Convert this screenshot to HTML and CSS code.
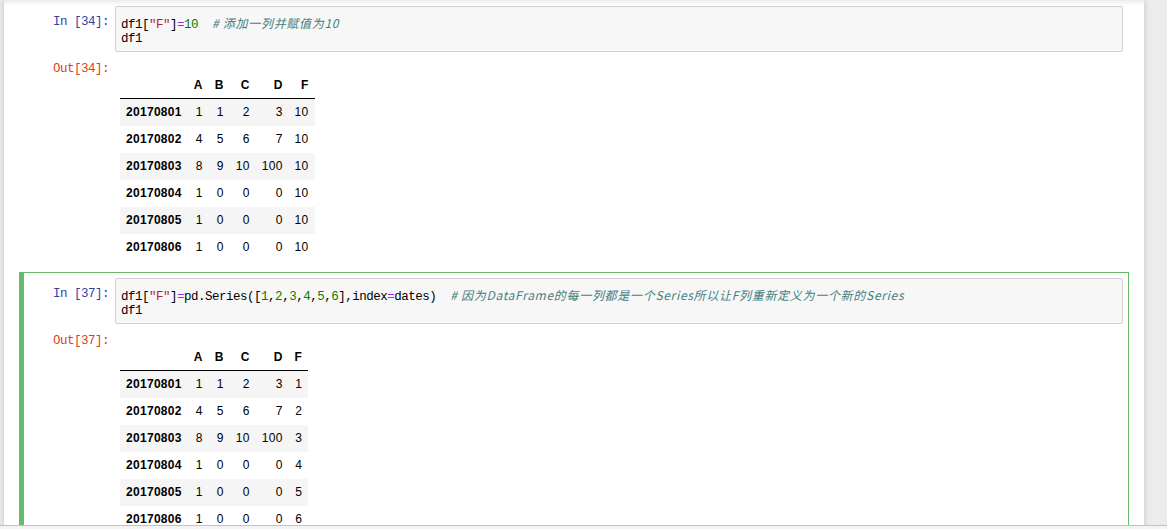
FILE: index.html
```html
<!DOCTYPE html>
<html lang="zh">
<head>
<meta charset="utf-8">
<title>Notebook</title>
<link rel="stylesheet" href="styles.css">
</head>
<body>
<div class="notebook">
  <div class="cell">
    <div class="row">
      <div class="prompt in">In&nbsp;[34]:</div>
      <div class="code">
        <div class="line">df1[<span class="s">"F"</span>]<span class="o">=</span><span class="n">10</span>  <span class="c"># 添加一列并赋值为10</span></div>
        <div class="line">df1</div>
      </div>
    </div>
    <div class="row">
      <div class="prompt out">Out[34]:</div>
      <div class="result">
        <table class="df">
          <thead>
            <tr><th></th><th>A</th><th>B</th><th>C</th><th>D</th><th>F</th></tr>
          </thead>
          <tbody>
            <tr><th>20170801</th><td>1</td><td>1</td><td>2</td><td>3</td><td>10</td></tr>
            <tr><th>20170802</th><td>4</td><td>5</td><td>6</td><td>7</td><td>10</td></tr>
            <tr><th>20170803</th><td>8</td><td>9</td><td>10</td><td>100</td><td>10</td></tr>
            <tr><th>20170804</th><td>1</td><td>0</td><td>0</td><td>0</td><td>10</td></tr>
            <tr><th>20170805</th><td>1</td><td>0</td><td>0</td><td>0</td><td>10</td></tr>
            <tr><th>20170806</th><td>1</td><td>0</td><td>0</td><td>0</td><td>10</td></tr>
          </tbody>
        </table>
      </div>
    </div>
  </div>
  <div class="cell selected">
    <div class="row">
      <div class="prompt in">In&nbsp;[37]:</div>
      <div class="code">
        <div class="line">df1[<span class="s">"F"</span>]<span class="o">=</span>pd.Series([<span class="n">1</span>,<span class="n">2</span>,<span class="n">3</span>,<span class="n">4</span>,<span class="n">5</span>,<span class="n">6</span>],index<span class="o">=</span>dates)  <span class="c"># 因为DataFrame的每一列都是一个Series所以让F列重新定义为一个新的Series</span></div>
        <div class="line">df1</div>
      </div>
    </div>
    <div class="row">
      <div class="prompt out">Out[37]:</div>
      <div class="result">
        <table class="df">
          <thead>
            <tr><th></th><th>A</th><th>B</th><th>C</th><th>D</th><th>F</th></tr>
          </thead>
          <tbody>
            <tr><th>20170801</th><td>1</td><td>1</td><td>2</td><td>3</td><td>1</td></tr>
            <tr><th>20170802</th><td>4</td><td>5</td><td>6</td><td>7</td><td>2</td></tr>
            <tr><th>20170803</th><td>8</td><td>9</td><td>10</td><td>100</td><td>3</td></tr>
            <tr><th>20170804</th><td>1</td><td>0</td><td>0</td><td>0</td><td>4</td></tr>
            <tr><th>20170805</th><td>1</td><td>0</td><td>0</td><td>0</td><td>5</td></tr>
            <tr><th>20170806</th><td>1</td><td>0</td><td>0</td><td>0</td><td>6</td></tr>
          </tbody>
        </table>
      </div>
    </div>
  </div>
</div>
<div class="bottom-edge"></div>
</body>
</html>
```
FILE: styles.css
```css
html, body {
  margin: 0;
  height: 100%;
  overflow: hidden;
}
body {
  background: #ececec;
  font-family: "Liberation Sans", Arial, sans-serif;
}
.notebook {
  margin-left: 4px;
  width: 1140px;
  height: 100%;
  background: linear-gradient(to bottom, #ebebeb 0, #fafafa 4px, #fff 6px);
  box-shadow: 0 0 6px rgba(0, 0, 0, 0.18);
}
.cell {
  margin-left: 15px;
  width: 1098px;
  padding: 5px;
  border: 1px solid transparent;
}
.cell.selected {
  border-color: #66bb6a;
  box-shadow: inset 4px 0 0 #66bb6a;
}
.row {
  display: flex;
  align-items: flex-start;
}
.prompt {
  flex: none;
  width: 84px;
  padding-right: 6px;
  text-align: right;
  font-family: "Liberation Mono", "DejaVu Sans Mono", monospace;
  font-size: 12.5px;
  letter-spacing: -0.5px;
  line-height: 17px;
  white-space: nowrap;
}
.prompt.in {
  color: #303f9f;
  padding-top: 8px;
}
.prompt.out {
  color: #d84315;
  padding-top: 9px;
}
.code {
  flex: 1;
  background: #f7f7f7;
  border: 1px solid #cfcfcf;
  border-radius: 2px;
  padding: 7px 5px 3px;
  font-family: "Liberation Mono", "DejaVu Sans Mono", monospace;
  font-size: 12.5px;
  letter-spacing: -0.5px;
  color: #000;
}
.line {
  height: 17px;
  line-height: 17px;
  white-space: pre;
  overflow: visible;
}
.s { color: #ba2121; }
.o { color: #aa22ff; }
.n { color: #008000; }
.c {
  color: #408080;
  font-style: italic;
  font-family: "Noto Sans CJK SC", "Liberation Mono", sans-serif;
  font-size: 12px;
  letter-spacing: 0.7px;
}
.result {
  padding: 20px 0 5px 5px;
}
.df {
  border-collapse: collapse;
  border: none;
  font-family: "Liberation Sans", Arial, sans-serif;
  font-size: 12px;
  letter-spacing: 0.3px;
  color: #000;
}
.df th, .df td {
  padding: 6px;
  text-align: right;
  vertical-align: middle;
  line-height: 15px;
}
.df thead th {
  line-height: 14px;
  font-weight: bold;
}
.df thead {
  border-bottom: 1px solid #000;
}
.df tbody th {
  font-weight: bold;
}
.df tbody tr:nth-child(odd) {
  background: #f5f5f5;
}
.bottom-edge {
  position: fixed;
  left: 0;
  right: 0;
  top: 525px;
  height: 4px;
  border-top: 1px solid #c2c2c2;
  background: #f3f3f3;
}
```
